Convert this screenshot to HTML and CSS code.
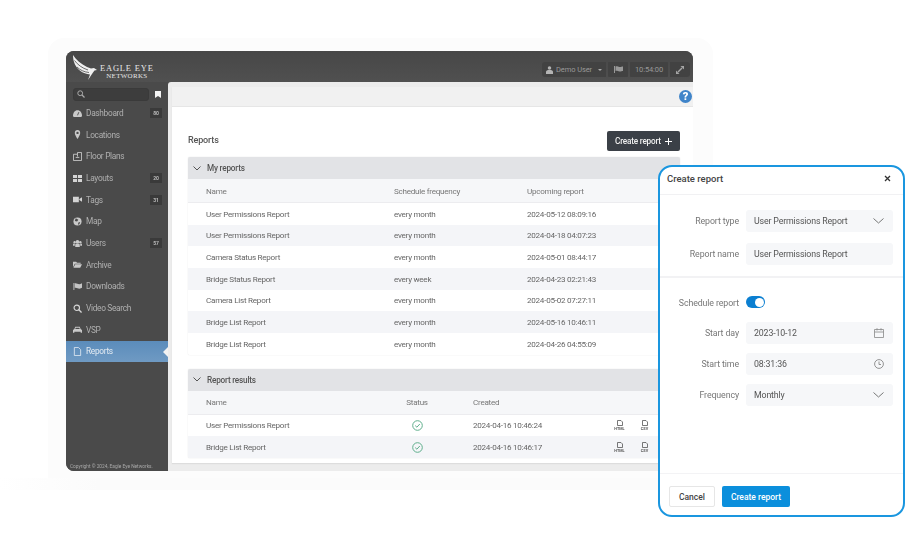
FILE: index.html
```html
<!DOCTYPE html>
<html lang="en">
<head>
<meta charset="utf-8">
<title>Reports</title>
<link rel="stylesheet" href="styles.css">
</head>
<body>
<div class="stage">
  <div class="backdrop"></div>
  <div class="strip"></div>
  <div class="app">
    <header class="topbar">
      <div class="logo">
        <svg class="wing" width="30" height="28" viewBox="0 0 30 28"><path d="M1 1C4 6 9 10 15 13L19 14.500L22 14L25 16L22.500 16.500L21 18.500L16 26L18 20.500C11 20 4 15 2 8C1.300 5.500 1 3 1 1Z" fill="#f0f0f0"/><path d="M2.500 6.500C6 11 10 14 16 16M5 13C8 16 12 18 17 18.500" stroke="#4a4a4a" stroke-width=".8" fill="none"/></svg>
        <div class="logo-text"><span class="logo-top">EAGLE EYE</span><span class="logo-bottom">NETWORKS</span></div>
      </div>
      <div class="controls">
        <div class="ctl ctl-user"><svg width="7" height="8" viewBox="0 0 8 9"><circle cx="4" cy="2.200" r="2" fill="#b4b4b4"/><path d="M0 9V6.500C0 5 1.500 4.500 4 4.500S8 5 8 6.500V9Z" fill="#b4b4b4"/></svg><span>Demo User</span><i class="caret"></i></div>
        <div class="ctl ctl-flag"><svg width="9" height="7" viewBox="0 0 9 7"><path d="M0 0H1V7H0ZM1.500 .5C3 0 4 1 5.500 1S8 .5 9 .5V5C8 5 7 5.500 5.500 5.500S3 4.500 1.500 5Z" fill="#999"/></svg></div>
        <div class="ctl ctl-time">10:54:00</div>
        <div class="ctl ctl-expand"><svg width="8" height="8" viewBox="0 0 8 8"><path d="M4.500 0H8V3.500ZM0 8V4.500L3.500 8ZM1.500 5.500L5.500 1.500L6.500 2.500L2.500 6.500Z" fill="#a5a5a5"/></svg></div>
      </div>
    </header>
    <div class="body">
      <aside class="sidebar">
        <div class="searchrow">
          <div class="search"><svg width="8" height="8" viewBox="0 0 8 8"><circle cx="3.200" cy="3.200" r="2.400" fill="none" stroke="#aaa" stroke-width="1"/><path d="M5 5L7.500 7.500" stroke="#aaa" stroke-width="1.200"/></svg></div>
          <svg class="bookmark" width="6" height="7" viewBox="0 0 6 7"><path d="M0 0H6V7L3 5L0 7Z" fill="#f4f4f4"/></svg>
        </div>
        <nav class="nav">
          <a class="nav-item"><svg class="ni" viewBox="0 0 10 10"><path d="M0 8C0 4 2 1.500 5 1.500S10 4 10 8L9 9H1Z" fill="#c9c9c9"/><path d="M5 7L6.500 3.500" stroke="#4a4a4a"/></svg><span class="nav-label">Dashboard</span><b class="count">80</b></a>
          <a class="nav-item"><svg class="ni" viewBox="0 0 10 10"><path d="M5 0C7 0 8 1.500 8 3.200C8 5 6 8 5 10C4 8 2 5 2 3.200C2 1.500 3 0 5 0Z" fill="#c9c9c9"/><circle cx="5" cy="3.200" r="1.300" fill="#4a4a4a"/></svg><span class="nav-label">Locations</span></a>
          <a class="nav-item"><svg class="ni" viewBox="0 0 10 10"><path d="M.5 2.500H5V.5H9.500V9.500H.5Z M3 6H7M5 2.500V5" fill="none" stroke="#c9c9c9"/></svg><span class="nav-label">Floor Plans</span></a>
          <a class="nav-item"><svg class="ni" viewBox="0 0 10 10"><path d="M0 1H4.500V4.500H0ZM5.500 1H10V4.500H5.500ZM0 5.500H4.500V9H0ZM5.500 5.500H10V9H5.500Z" fill="#d4d4d4"/></svg><span class="nav-label">Layouts</span><b class="count">20</b></a>
          <a class="nav-item"><svg class="ni" viewBox="0 0 10 10"><path d="M0 2H6.500V8H0ZM7 4.500L10 2.500V7.500L7 5.500Z" fill="#d4d4d4"/></svg><span class="nav-label">Tags</span><b class="count">31</b></a>
          <a class="nav-item"><svg class="ni" viewBox="0 0 10 10"><circle cx="5" cy="5" r="4.500" fill="#c9c9c9"/><path d="M3 1.500L6 3L4.500 5L2 4.500ZM6 6L8 5.500L7 8L5.500 8.500Z" fill="#4a4a4a"/></svg><span class="nav-label">Map</span></a>
          <a class="nav-item"><svg class="ni" viewBox="0 0 10 10"><circle cx="5" cy="3" r="2" fill="#c9c9c9"/><circle cx="1.800" cy="3.500" r="1.300" fill="#c9c9c9"/><circle cx="8.200" cy="3.500" r="1.300" fill="#c9c9c9"/><path d="M2.500 9V6.500C2.500 5.500 3.500 5 5 5S7.500 5.500 7.500 6.500V9ZM0 7.500V6C0 5 1 5 2 5V7.500ZM10 7.500V6C10 5 9 5 8 5V7.500Z" fill="#c9c9c9"/></svg><span class="nav-label">Users</span><b class="count">57</b></a>
          <a class="nav-item"><svg class="ni" viewBox="0 0 10 10"><path d="M0 2H3.500L4.500 3H8.500V4.200H2L0 8ZM2.500 4.800H10L8 8.500H.5Z" fill="#c9c9c9"/></svg><span class="nav-label">Archive</span></a>
          <a class="nav-item"><svg class="ni" viewBox="0 0 10 10"><path d="M.5 1H1.500V9H.5ZM2 1.500C4 1 5 2.500 7 2.500S9 2 10 1.500V6.500C9 7 8.500 7.500 7 7.500S4 6 2 6.500Z" fill="#c4c4c4"/></svg><span class="nav-label">Downloads</span></a>
          <a class="nav-item"><svg class="ni" viewBox="0 0 10 10"><circle cx="4.200" cy="4.200" r="3" fill="none" stroke="#d4d4d4" stroke-width="1.300"/><path d="M6.500 6.500L9.500 9.500" stroke="#d4d4d4" stroke-width="1.500"/></svg><span class="nav-label">Video Search</span></a>
          <a class="nav-item"><svg class="ni" viewBox="0 0 10 10"><path d="M2.500 2H7.500L8.500 4.500L10 5.500V8.500H8.500V7.500H1.500V8.500H0V5.500L1.500 4.500Z" fill="#c9c9c9"/><path d="M3 3H7L7.500 4.500H2.500Z" fill="#4a4a4a"/></svg><span class="nav-label">VSP</span></a>
          <a class="nav-item nav-active"><svg class="ni" viewBox="0 0 10 10"><path d="M1.500 .5H6L8.500 3V9.500H1.500Z" fill="none" stroke="#e6edf4" stroke-width=".9"/></svg><span class="nav-label">Reports</span></a>
        </nav>
        <div class="copyright">Copyright © 2024, Eagle Eye Networks.</div>
      </aside>
      <main class="main">
        <div class="panel">
          <div class="helpbar"><span class="help">?</span></div>
          <div class="page">
            <div class="page-head"><h1 class="page-title">Reports</h1><button class="dark-btn">Create report<svg width="7" height="7" viewBox="0 0 7 7"><path d="M3.500 0V7M0 3.500H7" stroke="#fff" stroke-width="1"/></svg></button></div>
            <section class="card">
              <div class="card-head"><svg class="chev" width="8" height="5" viewBox="0 0 8 5"><path d="M.5 .5L4 4L7.500 .5" fill="none" stroke="#555" stroke-width="1"/></svg>My reports</div>
              <div class="row row-head"><span class="c1">Name</span><span class="c2">Schedule frequency</span><span>Upcoming report</span></div>
              <div class="row"><span class="c1">User Permissions Report</span><span class="c2">every month</span><span>2024-05-12 08:09:16</span></div>
              <div class="row alt"><span class="c1">User Permissions Report</span><span class="c2">every month</span><span>2024-04-18 04:07:23</span></div>
              <div class="row"><span class="c1">Camera Status Report</span><span class="c2">every month</span><span>2024-05-01 08:44:17</span></div>
              <div class="row alt"><span class="c1">Bridge Status Report</span><span class="c2">every week</span><span>2024-04-23 02:21:43</span></div>
              <div class="row"><span class="c1">Camera List Report</span><span class="c2">every month</span><span>2024-05-02 07:27:11</span></div>
              <div class="row alt"><span class="c1">Bridge List Report</span><span class="c2">every month</span><span>2024-05-16 10:46:11</span></div>
              <div class="row"><span class="c1">Bridge List Report</span><span class="c2">every month</span><span>2024-04-26 04:55:09</span></div>
            </section>
            <section class="card card-results">
              <div class="card-head"><svg class="chev" width="8" height="5" viewBox="0 0 8 5"><path d="M.5 .5L4 4L7.500 .5" fill="none" stroke="#555" stroke-width="1"/></svg>Report results</div>
              <div class="row row-head"><span class="r1">Name</span><span class="r2">Status</span><span>Created</span></div>
              <div class="row"><span class="r1">User Permissions Report</span><span class="r2"><svg width="11" height="11" viewBox="0 0 11 11"><circle cx="5.500" cy="5.500" r="4.800" fill="none" stroke="#5fae8c"/><path d="M3.200 5.600L4.900 7.200L7.800 4" fill="none" stroke="#5fae8c"/></svg></span><span class="r3">2024-04-16 10:46:24</span><span class="dl"><svg width="6" height="6" viewBox="0 0 6 6"><path d="M.5 .5H4L5.500 2V5.500H.5Z" fill="none" stroke="#555" stroke-width=".8"/></svg><em>HTML</em></span><span class="dl"><svg width="6" height="6" viewBox="0 0 6 6"><path d="M.5 .5H4L5.500 2V5.500H.5Z" fill="none" stroke="#555" stroke-width=".8"/></svg><em>CSV</em></span></div>
              <div class="row alt"><span class="r1">Bridge List Report</span><span class="r2"><svg width="11" height="11" viewBox="0 0 11 11"><circle cx="5.500" cy="5.500" r="4.800" fill="none" stroke="#5fae8c"/><path d="M3.200 5.600L4.900 7.200L7.800 4" fill="none" stroke="#5fae8c"/></svg></span><span class="r3">2024-04-16 10:46:17</span><span class="dl"><svg width="6" height="6" viewBox="0 0 6 6"><path d="M.5 .5H4L5.500 2V5.500H.5Z" fill="none" stroke="#555" stroke-width=".8"/></svg><em>HTML</em></span><span class="dl"><svg width="6" height="6" viewBox="0 0 6 6"><path d="M.5 .5H4L5.500 2V5.500H.5Z" fill="none" stroke="#555" stroke-width=".8"/></svg><em>CSV</em></span></div>
            </section>
          </div>
        </div>
      </main>
    </div>
  </div>
  <div class="modal">
    <div class="modal-head"><h2 class="modal-title">Create report</h2><svg width="7" height="7" viewBox="0 0 7 7"><path d="M1 1L6 6M6 1L1 6" stroke="#333" stroke-width="1.300"/></svg></div>
    <div class="form form-top">
      <label class="lbl">Report type</label><div class="field">User Permissions Report<svg class="fi" width="11" height="6" viewBox="0 0 11 6"><path d="M.5 .5L5.500 5L10.500 .5" fill="none" stroke="#777" stroke-width="1"/></svg></div>
      <label class="lbl">Report name</label><div class="field">User Permissions Report</div>
    </div>
    <div class="form form-bottom">
      <label class="lbl lbl-switch">Schedule report</label><div class="switch-cell"><span class="switch"></span></div>
      <label class="lbl">Start day</label><div class="field">2023-10-12<svg class="fi" width="10" height="10" viewBox="0 0 10 10"><path d="M.5 1.500H9.500V9.500H.5ZM.5 4H9.500M3 .2V2.500M7 .2V2.500" fill="none" stroke="#888" stroke-width=".8"/></svg></div>
      <label class="lbl">Start time</label><div class="field">08:31:36<svg class="fi" width="10" height="10" viewBox="0 0 10 10"><circle cx="5" cy="5" r="4.400" fill="none" stroke="#888" stroke-width=".9"/><path d="M5 2.500V5.500H7" fill="none" stroke="#888" stroke-width=".9"/></svg></div>
      <label class="lbl">Frequency</label><div class="field">Monthly<svg class="fi" width="11" height="6" viewBox="0 0 11 6"><path d="M.5 .5L5.500 5L10.500 .5" fill="none" stroke="#777" stroke-width="1"/></svg></div>
    </div>
    <div class="modal-foot"><button class="btn-cancel">Cancel</button><button class="btn-primary">Create report</button></div>
  </div>
</div>
</body>
</html>
```
FILE: styles.css
```css
* { box-sizing: border-box; }
html, body { margin: 0; padding: 0; background: #fff; }
body { font-family: Roboto, "Liberation Sans", sans-serif; color: #555; overflow: hidden; }
.stage { position: relative; width: 906px; height: 545px; padding: 51px 0 0 66px; overflow: hidden; }
.backdrop { position: absolute; left: 48px; top: 38px; width: 665px; height: 440px; background: #fcfcfc; border-radius: 16px 16px 0 0; }
.strip { position: absolute; left: 0; top: 478px; width: 660px; height: 12px; background: linear-gradient(90deg, #fff, #fbfbfb 15%); }
.app { position: relative; width: 627px; height: 420px; display: flex; flex-direction: column; border-radius: 8px 8px 0 8px; overflow: hidden; background: #4a4a4a; filter: blur(.45px); }
.topbar { height: 31px; flex: none; display: flex; justify-content: space-between; background: linear-gradient(#474747, #505050); }
.logo { display: flex; align-items: flex-start; padding: 3px 0 0 6px; }
.logo-text { display: flex; flex-direction: column; align-items: center; margin: 10px 0 0 -2px; font-family: "Liberation Serif", serif; color: #e6e6e6; line-height: 1; }
.logo-top { font-size: 8.500px; letter-spacing: .8px; }
.logo-bottom { font-size: 7px; margin-top: 0; letter-spacing: .3px; }
.controls { display: flex; gap: 2px; margin: 11px 3px 0 0; height: 15px; }
.ctl { height: 15px; background: #424242; display: flex; align-items: center; justify-content: center; font-size: 7.500px; letter-spacing: -.1px; color: #999; border-radius: 1px; }
.ctl-user { width: 64px; gap: 3px; border-radius: 3px 0 0 3px; }
.ctl-flag { width: 20px; }
.ctl-time { width: 38px; }
.ctl-expand { width: 20px; border-radius: 0 3px 3px 0; }
.caret { width: 0; height: 0; margin-left: 3px; border: 2.500px solid transparent; border-top-color: #aaa; border-bottom: 0; }
.body { flex: 1; display: flex; min-height: 0; }
.sidebar { width: 102px; flex: none; display: flex; flex-direction: column; background: #4a4a4a; }
.searchrow { display: flex; align-items: center; gap: 6px; padding: 5px 0 0 7px; height: 19px; }
.search { width: 76px; height: 13px; background: #3d3d3d; border: 1px solid #3a3a3a; border-radius: 3px; display: flex; align-items: center; padding-left: 3px; }
.nav { margin-top: 1.300px; flex: 1; }
.nav-item { height: 21.670px; display: flex; align-items: center; padding: 0 6px 0 7px; font-size: 8.300px; letter-spacing: -.3px; color: #b0b0b0; position: relative; }
.ni { width: 9px; height: 9px; flex: none; margin-right: 4px; }
.nav-label { flex: 1; }
.count { background: #3a3a3a; color: #bbb; font-size: 5px; font-weight: 700; letter-spacing: 0; width: 12px; height: 10px; display: flex; align-items: center; justify-content: center; }
.nav-active { background: linear-gradient(#5b8cbb, #6f9ac3); color: #e4ebf2; }
.nav-active::after { content: ""; position: absolute; right: 0; top: 6px; border: 5px solid transparent; border-right-color: #f2f2f2; border-left: 0; }
.copyright { font-size: 4.800px; color: #a9a9a9; padding: 0 0 1.500px 4px; line-height: 6px; }
.main { flex: 1; min-width: 0; background: #ececec; padding: 5px 0 8px 4px; border-radius: 3px 0 0 0; }
.panel { height: 100%; background: #fff; overflow: hidden; box-shadow: 0 1px 1px #ddd; }
.helpbar { height: 20px; background: #f1f1f1; display: flex; align-items: center; justify-content: flex-end; padding-right: 1px; border-bottom: 1px solid #e6e6e6; }
.help { width: 13px; height: 13px; border-radius: 50%; background: #3f84c9; color: #fff; font-size: 11px; font-weight: 900; line-height: 13px; text-align: center; }
.page { padding: 24px 13px 0 16px; }
.page-head { display: flex; justify-content: space-between; align-items: center; height: 20px; margin-bottom: 6px; }
.page-title { margin: 0 0 2px; font-size: 9px; letter-spacing: -.15px; font-weight: 500; color: #555; }
.dark-btn { width: 73px; height: 20px; background: #3b4047; color: #f0f0f0; border: 0; border-radius: 2px; font: 500 8.200px Roboto, sans-serif; letter-spacing: -.2px; display: flex; align-items: center; justify-content: center; gap: 4px; padding: 0; }
.card { border-radius: 2px; overflow: hidden; background: #fff; box-shadow: 0 0 1px #ccc; }
.card-results { margin-top: 14px; }
.card-head { height: 22px; background: #e2e3e6; display: flex; align-items: center; font-size: 8.200px; letter-spacing: -.2px; font-weight: 500; color: #555; padding-left: 5px; }
.chev { margin-right: 6px; }
.row { height: 21.670px; display: flex; align-items: center; padding-left: 18px; font-size: 8.100px; letter-spacing: -.26px; color: #666; background: #fff; }
.row.alt { background: #f4f5f8; }
.row-head { height: 24px; background: #f6f7f9; color: #777; border-bottom: 1px solid #ececef; }
.c1 { width: 188px; }
.c2 { width: 133px; }
.r1 { width: 200px; }
.r2 { width: 22px; margin-right: 45px; display: flex; justify-content: center; }
.r3 { width: 134px; }
.dl { width: 25px; display: flex; flex-direction: column; align-items: center; line-height: 1; }
.dl em { font-style: normal; font-size: 3.800px; letter-spacing: 0; font-weight: 700; color: #555; margin-top: 1px; }
.modal { position: absolute; left: 658px; top: 165px; width: 247px; height: 352px; background: #fff; border: 2px solid #1a96df; border-radius: 14px; display: flex; flex-direction: column; filter: blur(.25px); }
.modal-head { height: 28px; flex: none; display: flex; align-items: center; justify-content: space-between; padding: 0 12px 5px 7px; border-bottom: 1px solid #f1f1f3; }
.modal-title { margin: 0; font-size: 9.500px; font-weight: 500; color: #444; }
.form { display: grid; grid-template-columns: 70px 147px; column-gap: 7px; padding-left: 9px; align-items: center; }
.form-top { row-gap: 11px; padding-top: 15px; padding-bottom: 11px; border-bottom: 2px solid #f2f2f4; }
.form-bottom { row-gap: 9px; flex: 1; align-content: start; padding-top: 14px; }
.lbl { text-align: right; font-size: 8.800px; letter-spacing: -.1px; color: #777; white-space: nowrap; }
.field { height: 22px; background: #f6f7f9; border-radius: 3px; display: flex; align-items: center; justify-content: space-between; padding: 0 9px 0 8px; font-size: 8.800px; letter-spacing: -.15px; color: #555; }
.switch-cell { height: 20px; margin-bottom: 1px; display: flex; align-items: center; }
.switch { width: 19px; height: 12px; background: #0b7fd1; border-radius: 6px; position: relative; }
.switch::after { content: ""; position: absolute; right: 1px; top: 1.500px; width: 9px; height: 9px; border-radius: 50%; background: #fff; }
.modal-foot { height: 42px; flex: none; display: flex; gap: 7px; padding: 12px 0 0 9px; border-top: 1px solid #f3f3f5; }
.btn-cancel { width: 46px; height: 21px; padding: 0; background: #fff; border: 1px solid #e6e6e6; border-radius: 2px; font: 500 8.500px Roboto, sans-serif; color: #444; }
.btn-primary { width: 68px; height: 21px; padding: 0; background: #0b8fdc; border: 0; border-radius: 2px; font: 500 8.500px Roboto, sans-serif; color: #fff; }
```
